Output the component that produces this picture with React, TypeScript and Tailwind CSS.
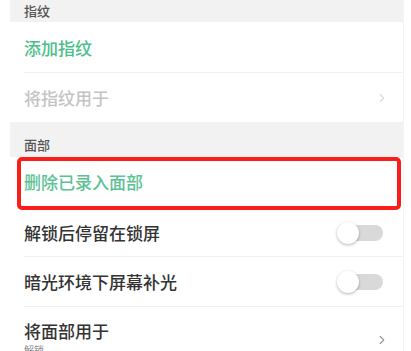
import React from 'react';
import { ChevronRight } from 'lucide-react';

const font = { fontFamily: '"Noto Sans CJK SC", "Noto Sans", sans-serif' };

const Toggle = () => (
  <div className="relative w-[48px] h-[24px] flex items-center">
    <div className="ml-[6px] w-[40px] h-[16px] rounded-full bg-[#d9d9d9]" />
    <div className="absolute left-0 top-px w-[22px] h-[22px] rounded-full bg-white shadow-[0_1px_3px_rgba(0,0,0,0.3)]" />
  </div>
);

const Divider = () => <div className="h-px bg-[#f0f0f0] ml-[14px]" />;

const App = () => {
  return (
    <div className="w-[411px] h-[351px] bg-white overflow-hidden" style={font}>
      <div className="ml-[10px] mr-[7px] border-r border-[#f4f4f4]">
        <div className="h-[22px] bg-[#f2f2f2] flex items-center pl-[14px] text-[13px] font-medium text-[#555]">
          指纹
        </div>
        <div className="h-[50px] flex items-center pl-[14px] pt-[2px] text-[17px] font-medium text-[#4dbd8c]">
          添加指纹
        </div>
        <Divider />
        <div className="h-[49px] flex items-center justify-between pl-[14px] pr-[14px] text-[17px] font-medium text-[#c4c4c4]">
          <span>将指纹用于</span>
          <ChevronRight size={14} className="text-[#dcdcdc]" />
        </div>
        <div className="h-[35px] bg-[#f2f2f2] flex items-end pb-[3px] pl-[14px] text-[13px] font-medium text-[#555]">
          面部
        </div>
        <div className="ml-[7px] mr-[2px] h-[53px] border-[4px] border-[#fa1e1a] rounded-[5px] flex items-center pl-[3px] pb-[4px] text-[17px] font-medium text-[#5cc294]">
          删除已录入面部
        </div>
        <div className="h-[46px] flex items-center justify-between pl-[14px] pr-[18px] text-[17px] font-medium text-[#333]">
          <span>解锁后停留在锁屏</span>
          <Toggle />
        </div>
        <Divider />
        <div className="h-[49px] flex items-center justify-between pl-[14px] pr-[18px] text-[17px] font-medium text-[#333]">
          <span>暗光环境下屏幕补光</span>
          <Toggle />
        </div>
        <Divider />
        <div className="h-[50px] flex items-center justify-between pl-[14px] pr-[14px]">
          <div className="flex flex-col pt-[12px]">
            <span className="text-[17px] font-medium text-[#333] leading-[24px]">将面部用于</span>
            <span className="text-[10px] text-[#888] leading-[14px]">解锁</span>
          </div>
          <ChevronRight size={14} className="text-[#999] mt-[16px]" />
        </div>
      </div>
    </div>
  );
};

export default App;
